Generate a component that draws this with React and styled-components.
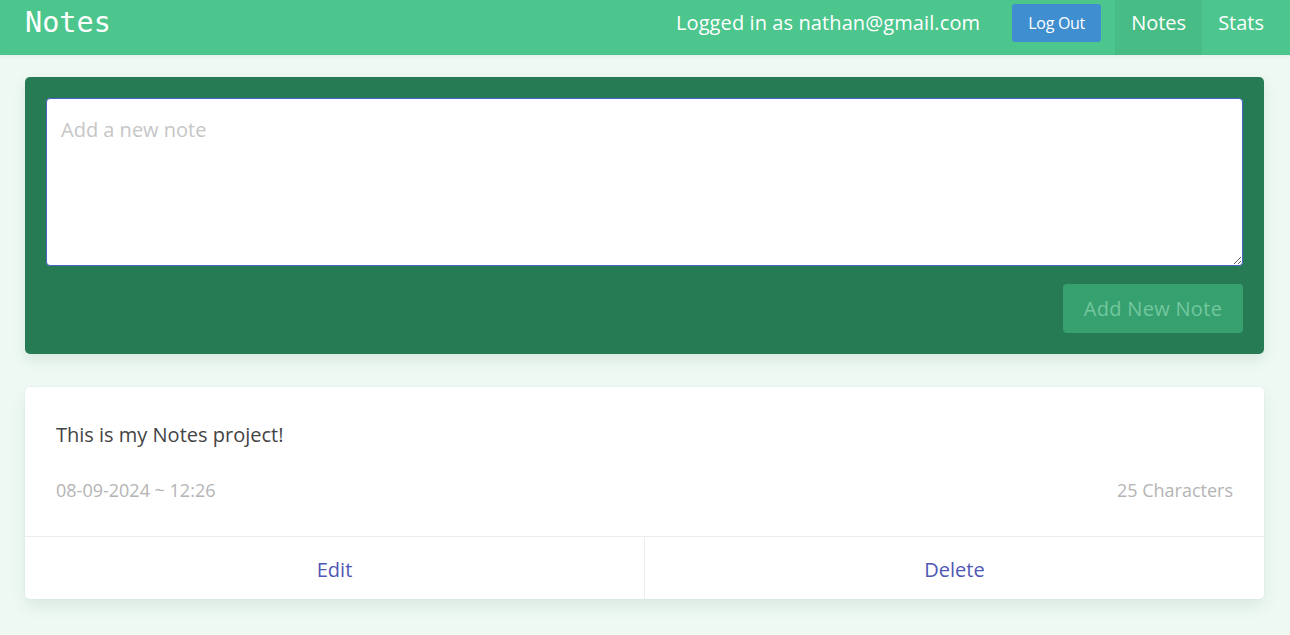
import React from "react"
import styled, { createGlobalStyle } from "styled-components"

const Global = createGlobalStyle`
  html, body { margin: 0; padding: 0; }
  body {
    background: #eef9f4;
    font-family: "Open Sans", "Noto Sans", sans-serif;
    color: #4a4a4a;
  }
`

const Nav = styled.nav`
  height: 55px;
  background: #4cc68d;
  display: flex;
  align-items: stretch;
  padding: 0 26px 0 25px;
  box-shadow: 0 2px 4px rgba(0, 0, 0, 0.04);
`

const Brand = styled.div`
  font-family: "DejaVu Sans Mono", "Liberation Mono", monospace;
  font-size: 28.5px;
  color: #fff;
  display: flex;
  align-items: center;
  padding-bottom: 10px;
  margin-right: auto;
`

const NavText = styled.div`
  color: #fff;
  font-size: 20px;
  letter-spacing: 0.1px;
  display: flex;
  align-items: center;
  padding-bottom: 10px;
  margin-right: 32px;
`

const LogOut = styled.button`
  align-self: flex-start;
  margin-top: 4px;
  width: 89px;
  height: 38px;
  background: #3e8ed0;
  color: #fff;
  border: none;
  border-radius: 3px;
  font-family: inherit;
  font-size: 16px;
  letter-spacing: -0.3px;
  margin-right: 14px;
`

const NavItem = styled.a`
  color: #fff;
  font-size: 20px;
  display: flex;
  align-items: center;
  padding: 0 16px 10px;
  background: ${p => (p.$active ? "#47bd85" : "transparent")};
  &:last-child { padding-right: 0; }
`

const Main = styled.main`
  padding: 22px 26px 20px 25px;
  display: flex;
  flex-direction: column;
  gap: 33px;
`

const Composer = styled.div`
  background: #267a54;
  border-radius: 5px;
  padding: 21px;
  display: flex;
  flex-direction: column;
  box-shadow: 0 6px 14px rgba(20, 80, 50, 0.1);
`

const TextArea = styled.textarea`
  box-sizing: border-box;
  height: 168px;
  width: 100%;
  border: 1px solid #4a64c9;
  border-radius: 4px;
  padding: 17px 14px;
  font-family: inherit;
  font-size: 20px;
  color: #4a4a4a;
  outline: none;
  resize: vertical;
  &::placeholder { color: #c6c6c6; }
`

const ButtonRow = styled.div`
  display: flex;
  justify-content: flex-end;
  margin-top: 18px;
`

const AddButton = styled.button`
  width: 180px;
  height: 49px;
  background: #37a06f;
  color: #72c79f;
  border: none;
  border-radius: 4px;
  font-family: inherit;
  font-size: 20px;
  letter-spacing: 0.3px;
`

const Card = styled.div`
  background: #fff;
  border-radius: 5px;
  box-shadow: 0 8px 16px rgba(10, 60, 40, 0.08), 0 0 0 1px rgba(10, 60, 40, 0.02);
`

const CardContent = styled.div`
  padding: 34px 31px 34px 31px;
`

const NoteText = styled.p`
  margin: 0 0 30px;
  font-size: 20px;
  color: #444;
`

const Meta = styled.div`
  display: flex;
  justify-content: space-between;
  font-size: 18px;
  color: #b4b4b4;
`

const Footer = styled.div`
  display: flex;
  border-top: 1px solid #ededed;
  height: 62px;
`

const FooterItem = styled.a`
  flex: 1;
  display: flex;
  align-items: center;
  justify-content: center;
  padding-top: 3px;
  color: #4f57b5;
  font-size: 20px;
  & + & { border-left: 1px solid #ededed; }
`

export default function App() {
  return (
    <>
      <Global />
      <Nav>
        <Brand>Notes</Brand>
        <NavText>Logged in as nathan@gmail.com</NavText>
        <LogOut>Log Out</LogOut>
        <NavItem $active>Notes</NavItem>
        <NavItem>Stats</NavItem>
      </Nav>
      <Main>
        <Composer>
          <TextArea placeholder="Add a new note" />
          <ButtonRow>
            <AddButton disabled>Add New Note</AddButton>
          </ButtonRow>
        </Composer>
        <Card>
          <CardContent>
            <NoteText>This is my Notes project!</NoteText>
            <Meta>
              <span>08-09-2024 ~ 12:26</span>
              <span>25 Characters</span>
            </Meta>
          </CardContent>
          <Footer>
            <FooterItem>Edit</FooterItem>
            <FooterItem>Delete</FooterItem>
          </Footer>
        </Card>
      </Main>
    </>
  )
}
